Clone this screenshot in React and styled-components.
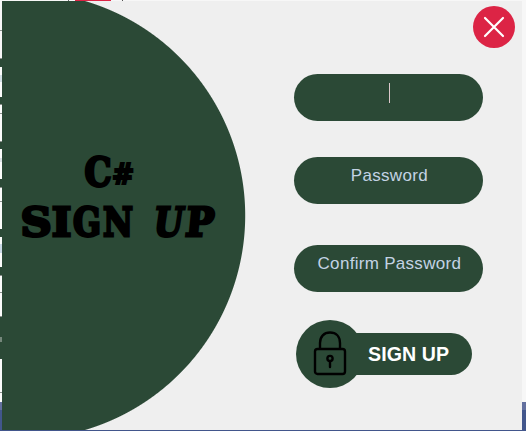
import React from "react";
import styled, { createGlobalStyle } from "styled-components";

const green = "#2b4936";

const GlobalStyle = createGlobalStyle`
  * { box-sizing: border-box; }
  body { margin: 0; background: #f7f7f7; overflow: hidden; }
  button { border: 0; padding: 0; }
`;

const Desktop = styled.div`
  width: 526px;
  height: 431px;
  display: grid;
  grid-template-columns: 2px 520px 4px;
  background: #f7f7f7;
`;

const Edge = styled.div`
  display: flex;
  flex-direction: column;
`;

const Segment = styled.div`
  flex: 0 0 ${(p) => p.$h}px;
  background: ${(p) => p.$color};
`;

const Center = styled.div`
  display: flex;
  flex-direction: column;
`;

const TopEdge = styled.div`
  height: 1px;
  display: flex;
  background: #f7f7f7;
`;

const Dash = styled.div`
  width: ${(p) => p.$w}px;
  margin-left: ${(p) => p.$gap}px;
  background: ${(p) => p.$color};
`;

const BottomEdge = styled.div`
  height: 1px;
  background: #42568c;
`;

const Window = styled.main`
  height: 429px;
  display: flex;
  background:
    radial-gradient(circle at 19.5px 214.5px, ${green} 223.2px, #efefef 224.2px);
`;

const Brand = styled.h1`
  width: 244px;
  margin: 0;
  padding: 147px 0 0 19px;
  font: bold 40px/48px "DejaVu Serif", serif;
  color: #000;
`;

const TitleLine = styled.span`
  display: flex;
  height: 50px;
  padding-left: ${(p) => p.$indent || 0}px;
`;

const Letter = styled.span`
  width: ${(p) => p.$w}px;
  margin-left: ${(p) => p.$gap || 0}px;
  padding-top: ${(p) => p.$drop || 0}px;
  display: flex;
  justify-content: center;
  font-size: ${(p) => p.$size || 40}px;
  -webkit-text-stroke: ${(p) => p.$stroke ?? 2.8}px #000;
  transform: scaleX(${(p) => p.$sx}) skewX(${(p) => p.$skew || 0}deg);
`;

const Form = styled.form`
  width: 276px;
  display: flex;
  flex-direction: column;
  align-items: flex-start;
  padding-left: 48px;
`;

const CloseButton = styled.button`
  width: 42px;
  height: 42px;
  margin: 5px 0 0 179px;
  border-radius: 50%;
  background: #dc2445;
  display: flex;
  align-items: center;
  justify-content: center;
`;

const Field = styled.div`
  width: 189px;
  height: 46.5px;
  margin-top: ${(p) => p.$top}px;
  margin-left: 0.4px;
  border-radius: 24px;
  background: ${green};
  display: flex;
  justify-content: center;
  padding-top: 8px;
  font: 17px/22px "Liberation Sans", Arial, sans-serif;
  color: #c3d3e4;
`;

const Placeholder = styled.span`
  height: 22px;
  padding-left: 1px;
  white-space: nowrap;
  letter-spacing: 0.3px;
`;

const Caret = styled.span`
  width: 1px;
  height: 20px;
  margin-top: 1px;
  margin-left: 2px;
  background: #dcc8cb;
`;

const Submit = styled.button`
  display: flex;
  align-items: center;
  margin: 28.5px 0 0 2px;
  background: none;
`;

const LockBadge = styled.span`
  width: 68px;
  height: 68px;
  border-radius: 50%;
  background: ${green};
  display: flex;
  align-items: center;
  justify-content: center;
`;

const LockIcon = styled.svg`
  margin-bottom: 3px;
`;

const SubmitLabel = styled.span`
  width: 118px;
  height: 42px;
  margin-left: -10px;
  padding-left: 14px;
  border-radius: 0 21px 21px 0;
  background: ${green};
  color: #fff;
  text-align: left;
  white-space: nowrap;
  letter-spacing: 0.1px;
  font: bold 19.6px/42px "Liberation Sans", Arial, sans-serif;
`;

const white = "#fbfcfb";
const gray = "#8b918d";
const leftEdge = [
  [30, "#f7f7f7"], [1, gray], [27, "#f7f7f7"], [1, gray], [8, green],
  [8, white], [7, "#d3e0e5"], [15, white], [7, green], [1, gray],
  [8, white], [1, gray], [27, white], [1, gray], [7, green],
  [9, white], [4, "#dce2e6"], [17, white], [8, green], [1, gray],
  [13, white], [1, gray], [27, white], [8, green],
  [7, white], [9, "#cbd9e6"], [14, white], [8, green], [1, gray],
  [16, white], [1, gray], [23, white], [1, gray],
  [20, green], [5, "#75877b"], [17, green],
  [33, white], [1, gray], [9, white], [8, "#63709f"], [21, "#42568c"],
];
const rightEdge = [[402, "#f7f7f7"], [8, "#63709f"], [21, "#42568c"]];

const segments = (list) =>
  list.map(([h, color], i) => <Segment key={i} $h={h} $color={color} />);

export default function App() {
  return (
    <>
      <GlobalStyle />
      <Desktop>
        <Edge>{segments(leftEdge)}</Edge>
        <Center>
          <TopEdge>
            <Dash $gap={66} $w={1} $color="#666" />
            <Dash $gap={6} $w={36} $color="#dc2445" />
            <Dash $gap={11} $w={1} $color="#555" />
          </TopEdge>
          <Window>
            <Brand>
              <TitleLine $indent={63}>
                <Letter $w={28} $sx={0.85}>C</Letter>
                <Letter $w={22} $sx={0.98} $size={27} $stroke={2} $drop={3}>#</Letter>
              </TitleLine>
              <TitleLine>
                <Letter $w={30} $sx={1.08}>S</Letter>
                <Letter $w={21} $sx={1.05}>I</Letter>
                <Letter $w={30} $sx={0.82}>G</Letter>
                <Letter $w={32} $sx={0.82}>N</Letter>
                <Letter $w={33} $gap={18} $sx={0.84} $skew={-10}>U</Letter>
                <Letter $w={30} $sx={0.94} $skew={-6}>P</Letter>
              </TitleLine>
            </Brand>
            <Form>
              <CloseButton type="button" aria-label="Close">
                <svg width="22" height="22" viewBox="0 0 22 22">
                  <path d="M2 2 20 20M20 2 2 20" stroke="#fff" strokeWidth="2.2" strokeLinecap="round" />
                </svg>
              </CloseButton>
              <Field $top={26}><Caret /></Field>
              <Field $top={36.5}><Placeholder>Password</Placeholder></Field>
              <Field $top={41.5}><Placeholder>Confirm Password</Placeholder></Field>
              <Submit type="button">
                <LockBadge>
                  <LockIcon width="34" height="46" viewBox="0 0 34 46" fill="none" stroke="#000" strokeWidth="2.4">
                    <rect x="2" y="19" width="30" height="25" rx="2.5" />
                    <path d="M7 19V13C7 6.5 11 2.5 17 2.5S27 6.5 27 13V19" />
                    <circle cx="17" cy="28.5" r="2.6" />
                    <path d="M17 31V37" strokeLinecap="round" />
                  </LockIcon>
                </LockBadge>
                <SubmitLabel>SIGN UP</SubmitLabel>
              </Submit>
            </Form>
          </Window>
          <BottomEdge />
        </Center>
        <Edge>{segments(rightEdge)}</Edge>
      </Desktop>
    </>
  );
}
